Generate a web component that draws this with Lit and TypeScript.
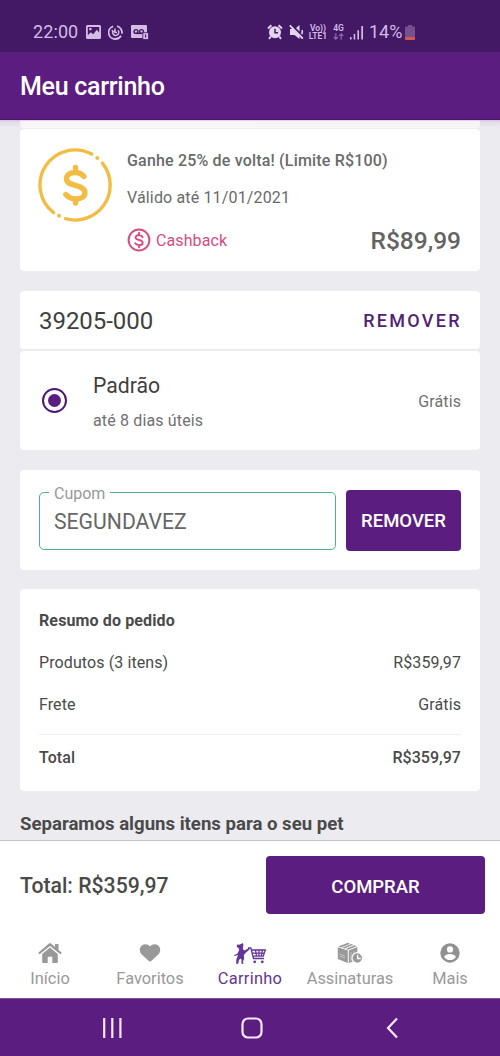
import { LitElement, html, css, svg } from "lit";
import { customElement } from "lit/decorators.js";

const icons = {
  picture: html`<svg width="15" height="14" viewBox="0 0 15 14"><path fill="#d3bde6" fill-rule="evenodd" d="M1.5 0h12A1.5 1.5 0 0 1 15 1.5v11a1.5 1.5 0 0 1-1.500 1.500h-12A1.500 1.500 0 0 1 0 12.500v-11A1.500 1.500 0 0 1 1.500 0ZM1.800 2v8.200l3-3 2.400 2 3.600-4.400 2.400 2.600V2ZM3.200 3h2.300v2.200H3.200Z"/></svg>`,
  refresh: html`<svg width="15" height="15" viewBox="0 0 15 15" fill="none" stroke="#d3bde6"><path stroke-width="1.800" d="M5.200 1.300A6.500 6.500 0 0 0 7.500 14a6.500 6.500 0 0 0 5.600-3.200M9 1.200a6.500 6.500 0 0 1 4.900 7.500"/><path stroke-width="1.500" d="M4.700 6.500a3.100 3.100 0 1 0 5.300-1.200M4 5l1 2 2-1M7 3.500v4h2"/></svg>`,
  voicemail: html`<svg width="18" height="15" viewBox="0 0 18 15"><rect width="16" height="13" rx="1" fill="#d3bde6"/><g fill="none" stroke="#431865" stroke-width="1.400"><circle cx="5" cy="6.500" r="1.900"/><circle cx="10.500" cy="6.500" r="1.900"/><path d="M5 8.400h6"/></g><rect x="11.800" y="7.700" width="5.700" height="6.800" rx=".8" fill="#d3bde6" stroke="#431865" stroke-width=".8"/><path d="M14.600 9.500v3" stroke="#431865" stroke-width="1.100"/></svg>`,
  alarm: html`<svg width="16" height="16" viewBox="0 0 16 16"><circle cx="8" cy="8.300" r="6" fill="#e3d5ee"/><path d="M1 4.500 4.400 1.300M15 4.500l-3.400-3.200M3.800 12.500l-1.800 2.300M12.200 12.500l1.800 2.300" stroke="#e3d5ee" stroke-width="2"/><path d="M8 4.800v4h3" fill="none" stroke="#431865" stroke-width="1.500"/></svg>`,
  mute: html`<svg width="15" height="16" viewBox="0 0 15 16"><path fill="#e3d5ee" d="M1 5h3l6.500 6v4L5.500 11H1ZM10.500 1v6.500L7 4ZM12 9.500c.6-1 .6-2 .3-3l1.500-.8c.6 2 .3 3.500-.6 5Z"/><path d="m.8 1.300 13 13.400" stroke="#e3d5ee" stroke-width="1.900"/></svg>`,
  arrows: html`<svg width="11" height="7" viewBox="0 0 11 7" fill="none" stroke="#8965a8" stroke-width="1.300"><path d="M2.800.3v6M.7 4l2.100 2.200L4.900 4M8.200 6.700v-6M6.100 3 8.200.8 10.300 3"/></svg>`,
  signal: html`<svg width="14" height="15" viewBox="0 0 14 15" fill="#d3bde6"><path d="M0 12h1.500v2.500H0zM3.700 9h1.500v5.500H3.700zM7.400 5.200h1.600v9.300H7.400zM11.300 1H13v13.500h-1.700z"/></svg>`,
  battery: html`<svg width="10" height="15" viewBox="0 0 10 15"><path fill="#74508f" d="M3 0h4v1.500h2a1 1 0 0 1 1 1V12H0V2.500a1 1 0 0 1 1-1h2Z"/><path fill="#d2584f" d="M0 12h10v2a1 1 0 0 1-1 1H1a1 1 0 0 1-1-1Z"/></svg>`,
  coin: html`<svg width="74" height="74" viewBox="0 0 74 74" fill="none" stroke="#f3bd45" stroke-linecap="round"><path stroke-width="3.400" d="M53.500 6.100A35 35 0 0 0 15.500 64.600M27.500 70.700A35 35 0 0 0 64.400 15.100"/><g fill="#f3bd45" stroke="none"><circle cx="59.300" cy="10" r="2"/><circle cx="21" cy="67.700" r="2"/></g><path stroke-width="5.400" d="M37.500 19.500v4M37.500 51v4M46 28.500c-2.500-3-5.600-4-9-4-5 0-8.500 2.400-8.500 6.200 0 4.200 4 5.300 9 6.700 5.300 1.500 9.400 3 9.400 7.300 0 4-3.700 6.300-9 6.300-4.300 0-7.600-1.700-10-4.500"/></svg>`,
  cashback: html`<svg width="24" height="24" viewBox="0 0 24 24" fill="none" stroke="#d94b83" stroke-linecap="round"><circle cx="12" cy="12" r="10.400" stroke-width="2"/><path stroke-width="1.900" d="M12 4.700v2M12 17.300v2M15.600 9.300C14.800 7.800 13.500 7 12 7c-2.100 0-3.500 1-3.500 2.500 0 1.600 1.500 2 3.500 2.500 2.200.5 3.700 1.100 3.700 2.700 0 1.400-1.500 2.400-3.600 2.400-1.700 0-3-.6-3.900-1.900"/></svg>`,
  home: html`<svg width="26" height="22" viewBox="0 0 26 22" fill="#999"><path d="M13 5.600 20.800 12v8.200a.8.800 0 0 1-.8.800h-4.700v-6.300h-4.600V21H6a.8.800 0 0 1-.8-.8V12Z"/><path d="M12 1.500a1.500 1.500 0 0 1 2 0l4 3.400V2h3.500v6l3.300 2.700-1.400 1.600L13 4.100l-10.400 8.200-1.400-1.600Z"/></svg>`,
  heart: html`<svg width="22" height="20" viewBox="0 0 22 20"><path fill="#999" d="M11 18.500c-.5 0-1-.3-1.500-.8L3 11.700C-.2 8.700.4 4.400 2.900 2.500 5.500.5 9 1 11 3.400 13 1 16.500.5 19.100 2.500c2.500 1.900 3.100 6.200-.1 9.200l-6.500 6c-.5.500-1 .8-1.500.8Z"/></svg>`,
  cart: html`<svg width="34" height="23" viewBox="0 0 34 23"><path fill="#653595" d="M4.200 2.500 6 2.800 8 2l2-.9.400 1.800-.5 4.300 1.700 1.400 4.200-2.600.9 1.300-4.100 3.700-1.800 1.900.4 3.700-1.300 3.200.8 2H8.400l.1-4.400-1.300-1-1.400 2-.5 3.400H3.100l.3-4.500 1.500-4L4.600 13l-2.600 1-1.300-.5 3.800-2L6.200 8l-.8-2.300L3.600 5Z"/><path d="M15 6h2.800l2.700 10.500H31M18.300 8h14l-2 6.200H19.900M19 11.100h12.500M22.500 8l1 6M26 8v6M29.300 8l-.8 6" fill="none" stroke="#653595" stroke-width="1.300"/><circle cx="21.700" cy="19.800" r="1.400" fill="#653595"/><circle cx="29.300" cy="19.800" r="1.400" fill="#653595"/></svg>`,
  box: html`<svg width="26" height="22" viewBox="0 0 26 22"><path fill="#999" d="m.8 5.300 10 3.300v12.300L.8 17ZM11.800 8.600l8.500-3.500v13l-8.500 3ZM1.500 4.400 10.800.8l2.200.9-9 3.700ZM5.200 5.800 14.200 2l2 .8-8.700 3.800ZM8.700 7 17.400 3.300l2.200.9-8.400 3.600Z"/><path d="m2.500 12 5.500 2M2.500 14l5.500 2M14 10v9M17 9v9" stroke="#ddd" stroke-width=".6"/><circle cx="20.300" cy="16" r="5.300" fill="#999" stroke="#fff" stroke-width="1.200"/><path d="M20.600 12.700v3.800h3.200" fill="none" stroke="#fff" stroke-width="1.300"/></svg>`,
  person: html`<svg width="20" height="20" viewBox="0 0 20 20"><path fill="#919191" fill-rule="evenodd" d="M10 .3a9.700 9.700 0 1 1 0 19.400A9.700 9.700 0 0 1 10 .3ZM10 3.300a3.100 3.100 0 1 0 0 6.200 3.100 3.100 0 0 0 0-6.200ZM10 17c2.500 0 4.600-1.200 5.800-3.100 0-1.900-3.900-3-5.800-3s-5.800 1.100-5.800 3C5.400 15.800 7.500 17 10 17Z"/></svg>`,
};

@customElement("app-root")
export class AppRoot extends LitElement {
  static styles = css`
    :host { display: flex; flex-direction: column; width: 500px; height: 1056px; overflow: hidden; background: #ecebf0; font-family: Roboto, sans-serif; color: #4a4a4a; }
    * { box-sizing: border-box; }
    svg { display: block; flex: none; }
    .status { height: 52px; flex: none; background: #431865; display: flex; align-items: center; padding: 12px 85px 0 33px; color: #d3bde6; font-size: 18px; line-height: 20px; white-space: nowrap; }
    .clock { width: 52.500px; letter-spacing: 0.1px; }
    .left { display: flex; gap: 7.500px; align-items: center; }
    .right { display: flex; align-items: center; margin-left: auto; }
    .mute { margin-left: 5.500px; }
    .tiny { display: flex; flex-direction: column; align-items: center; font-size: 8.500px; line-height: 8px; font-weight: 600; width: 19px; margin-left: 5px; }
    .net { width: 12px; }
    .net svg { margin-top: 1px; }
    .signal { margin-left: 5.500px; }
    .pct { margin-left: 5px; width: 36px; }
    .appbar { height: 68px; flex: none; background: #5b1d80; border-bottom: 1px solid #481568; color: #fff; padding: 0 20px; font-size: 25px; font-weight: 500; letter-spacing: -0.280px; line-height: 70px; }
    .content { flex: 1; min-height: 0; overflow: hidden; padding: 0 20px; display: flex; flex-direction: column; background: linear-gradient(#d3c0e2 0, #e2dde8 2px, #ecebf0 8px); }
    .card { flex: none; background: #fff; border-radius: 4px; }
    .peek { height: 7.500px; border-radius: 0 0 4px 4px; background: linear-gradient(#d8c2ec 0, #f7f3f5 1.500px, #faf7f8); }
    .back { height: 142px; margin-top: 1.500px; padding: 19px 19px 0 18px; display: flex; gap: 15px; }
    .info { flex: 1; color: #6a6a6a; font-size: 16px; }
    .promo { line-height: 25px; font-weight: 500; letter-spacing: 0.180px; }
    .valid { line-height: 24px; margin-top: 13px; letter-spacing: 0.150px; }
    .row { display: flex; justify-content: space-between; align-items: center; }
    .earn { margin-top: 16px; height: 28px; }
    .pink { display: flex; align-items: center; gap: 5px; color: #d94b83; letter-spacing: 0.1px; }
    .amount { font-size: 24.500px; font-weight: 500; color: #636363; }
    .zip { height: 58px; margin-top: 20px; padding: 1px 19px 0; font-size: 24px; letter-spacing: -0.050px; color: #3f3f3f; }
    .link { font-size: 18px; font-weight: 500; letter-spacing: 2.300px; margin-right: -0.800px; color: #4f2277; }
    .option { height: 99px; margin-top: 2px; padding: 0 19px 0 21.500px; display: flex; align-items: center; background: #fff; }
    .radio { width: 25px; height: 25px; border: 2.500px solid #4a1a75; border-radius: 50%; display: grid; place-items: center; }
    .dot { width: 13px; height: 13px; border-radius: 50%; background: #5b1d80; }
    .ship { flex: 1; margin-left: 26.500px; padding-top: 4px; }
    .name { font-size: 21.200px; line-height: 28px; color: #3f3f3f; }
    .days { font-size: 16px; line-height: 24px; margin-top: 9px; color: #707070; letter-spacing: 0.150px; }
    .free { font-size: 16px; color: #707070; letter-spacing: 0.1px; padding-top: 1px; }
    .coupon { height: 99.500px; margin-top: 20px; padding: 19.500px 19px; display: flex; gap: 10px; align-items: flex-start; }
    .field { position: relative; flex: 1; height: 58px; margin-top: 2.500px; border: 1.500px solid #4fb08e; border-radius: 5px; padding-left: 14px; font-size: 21.200px; line-height: 58px; color: #666; }
    .legend { position: absolute; left: 9px; top: -9px; padding: 0 5px; background: #fff; font-size: 16px; line-height: 20px; color: #999; }
    .btn { background: #5b1d80; color: #fff; border: 0; border-radius: 4px; font: 500 18.500px Roboto, sans-serif; padding: 0; display: grid; place-items: center; }
    .remove { width: 115px; height: 61px; padding-top: 2px; }
    .summary { height: 202px; margin-top: 19.500px; padding: 20px 19px 0; font-size: 16px; }
    .summary .row { height: 24px; margin-bottom: 17.500px; letter-spacing: 0.1px; }
    .summary .title { height: 24px; line-height: 24px; margin-bottom: 17.500px; font-weight: 700; letter-spacing: 0.120px; }
    .rule { height: 1px; background: #eee; margin: 18px 0 10px; }
    .summary .total { font-weight: 500; letter-spacing: 0.050px; }
    .more { margin-top: 20px; line-height: 26px; font-size: 18.600px; font-weight: 700; flex: none; }
    .buy { height: 92px; flex: none; background: #fff; border-top: 1.500px solid #c4c4c8; display: flex; justify-content: space-between; padding: 15px 15px 0 20px; font-size: 21.200px; font-weight: 500; line-height: 60px; }
    .comprar { width: 219px; height: 58px; padding-top: 3px; }
    .tabs { height: 66px; flex: none; background: #fff; display: grid; grid-template-columns: repeat(5, 100px); color: #999; font-size: 16.400px; }
    .tab { display: flex; flex-direction: column; align-items: center; padding-top: 9px; }
    .glyph { height: 24px; display: flex; align-items: center; }
    .label { line-height: 28px; }
    .active { color: #653595; letter-spacing: 0.300px; }
    .sys { height: 58px; flex: none; background: #5b1d80; border-top: 1px solid #7a5293; }
  `;

  private tab(icon: unknown, label: string, active = false) {
    return html`<div class="tab ${active ? "active" : ""}"><div class="glyph">${icon}</div><div class="label">${label}</div></div>`;
  }

  render() {
    return html`
      <div class="status">
        <div class="clock">22:00</div>
        <div class="left">${icons.picture}${icons.refresh}${icons.voicemail}</div>
        <div class="right">
          ${icons.alarm}<div class="mute">${icons.mute}</div>
          <div class="tiny"><span>Vo))</span><span>LTE1</span></div>
          <div class="tiny net"><span>4G</span>${icons.arrows}</div>
          <div class="signal">${icons.signal}</div>
          <div class="pct">14%</div>${icons.battery}
        </div>
      </div>
      <div class="appbar">Meu carrinho</div>
      <div class="content">
        <div class="card peek"></div>
        <div class="card back">
          ${icons.coin}
          <div class="info">
            <div class="promo">Ganhe 25% de volta! (Limite R$100)</div>
            <div class="valid">Válido até 11/01/2021</div>
            <div class="row earn"><div class="pink">${icons.cashback}<span>Cashback</span></div><span class="amount">R$89,99</span></div>
          </div>
        </div>
        <div class="card row zip"><span>39205-000</span><span class="link">REMOVER</span></div>
        <div class="card option">
          <div class="radio"><div class="dot"></div></div>
          <div class="ship"><div class="name">Padrão</div><div class="days">até 8 dias úteis</div></div>
          <div class="free">Grátis</div>
        </div>
        <div class="card coupon">
          <div class="field"><span class="legend">Cupom</span><span class="code">SEGUNDAVEZ</span></div>
          <button class="btn remove">REMOVER</button>
        </div>
        <div class="card summary">
          <div class="title">Resumo do pedido</div>
          <div class="row"><span>Produtos (3 itens)</span><span>R$359,97</span></div>
          <div class="row"><span>Frete</span><span>Grátis</span></div>
          <div class="rule"></div>
          <div class="row total"><span>Total</span><span>R$359,97</span></div>
        </div>
        <div class="more">Separamos alguns itens para o seu pet</div>
      </div>
      <div class="buy"><span>Total: R$359,97</span><button class="btn comprar">COMPRAR</button></div>
      <div class="tabs">
        ${this.tab(icons.home, "Início")}
        ${this.tab(icons.heart, "Favoritos")}
        ${this.tab(icons.cart, "Carrinho", true)}
        ${this.tab(icons.box, "Assinaturas")}
        ${this.tab(icons.person, "Mais")}
      </div>
      <div class="sys">
        <svg width="500" height="57" viewBox="0 0 500 57" fill="none" stroke="#f5e9fa" stroke-width="2.200">
          ${svg`<path d="M104.200 19v20M112.300 19v20M120.400 19v20"/><rect x="242.500" y="19.500" width="19" height="19" rx="5.500"/><path d="m397 19.500-9 9.500 9 9.500"/>`}
        </svg>
      </div>
    `;
  }
}
